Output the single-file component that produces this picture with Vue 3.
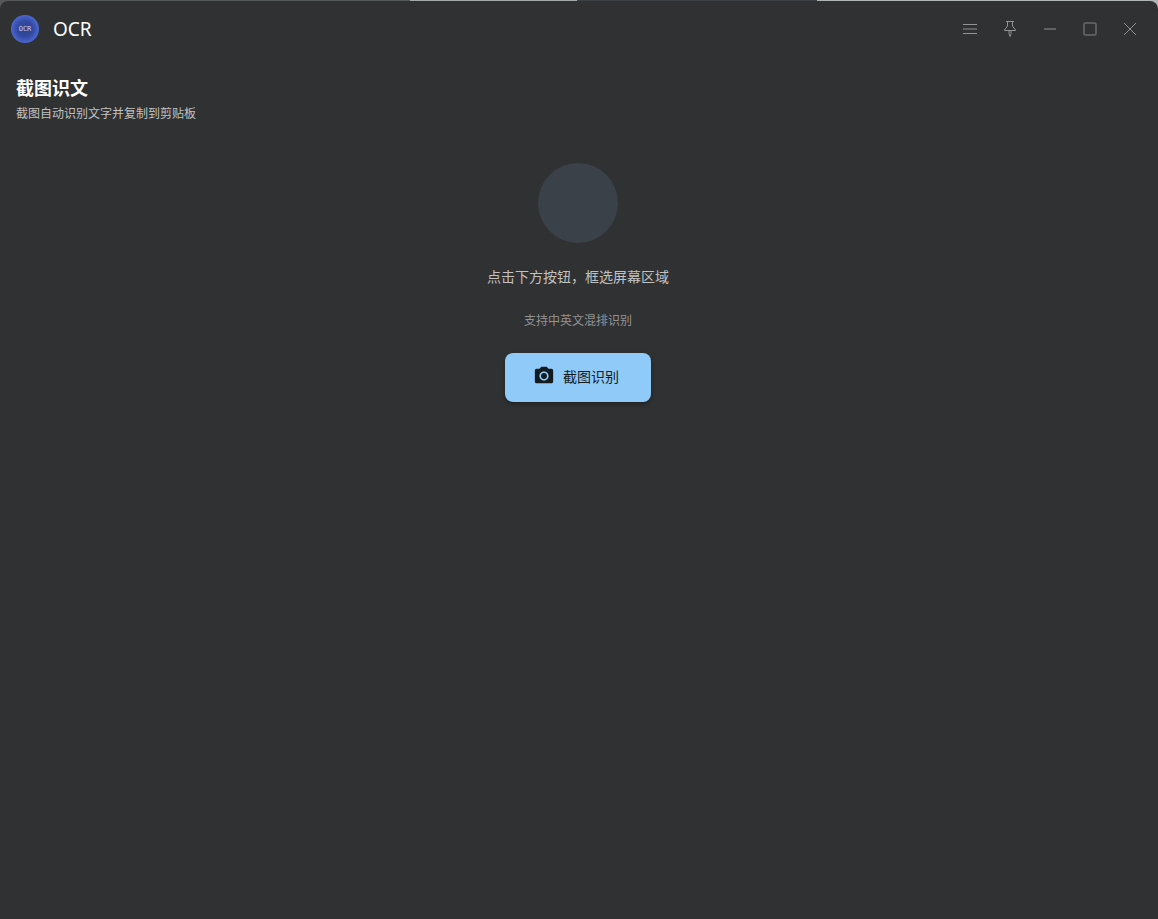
<script setup>
const title = 'OCR'
</script>

<template>
  <div class="desktop">
    <div class="window">
      <header class="titlebar">
        <svg class="logo" viewBox="0 0 28 28" aria-hidden="true">
          <defs>
            <radialGradient id="logo-fill">
              <stop offset="0" stop-color="#2c4089" />
              <stop offset="0.55" stop-color="#3249a0" />
              <stop offset="1" stop-color="#4b67d2" />
            </radialGradient>
          </defs>
          <circle cx="14" cy="14" r="14" fill="url(#logo-fill)" />
          <text x="14" y="16" text-anchor="middle" class="logo-text">OCR</text>
        </svg>
        <span class="app-name">{{ title }}</span>
        <nav class="controls">
          <button type="button" aria-label="菜单">
            <svg viewBox="0 0 20 20"><path d="M3 5.5h14M3 14.5h14" stroke="#929394" /><path d="M3 10h14" stroke="#606163" stroke-width="2" /></svg>
          </button>
          <button type="button" aria-label="置顶">
            <svg viewBox="0 0 20 20"><path d="M6 2.5h8M7.5 2.5v4.5L4.5 11v.5h11V11l-3-4V2.5M9 11.5v3l1 3 1-3v-3" stroke="#929394" /></svg>
          </button>
          <button type="button" aria-label="最小化">
            <svg viewBox="0 0 20 20"><path d="M4 10h12" stroke="#606163" stroke-width="2" /></svg>
          </button>
          <button type="button" aria-label="最大化">
            <svg viewBox="0 0 20 20"><rect x="4" y="4" width="12" height="12" rx="1.5" stroke="#68696b" stroke-width="1.5" /></svg>
          </button>
          <button type="button" aria-label="关闭">
            <svg viewBox="0 0 20 20"><path d="M4 4l12 12M16 4L4 16" stroke="#8e8f90" /></svg>
          </button>
        </nav>
      </header>

      <main>
        <h1>截图识文</h1>
        <p class="subtitle">截图自动识别文字并复制到剪贴板</p>
        <section class="capture">
          <div class="halo"></div>
          <p class="prompt">点击下方按钮，框选屏幕区域</p>
          <p class="hint">支持中英文混排识别</p>
          <button type="button" class="primary">
            <svg viewBox="0 0 24 24" aria-hidden="true">
              <path fill-rule="evenodd" d="M9 2 7.17 4H4c-1.1 0-2 .9-2 2v12c0 1.1.9 2 2 2h16c1.1 0 2-.9 2-2V6c0-1.1-.9-2-2-2h-3.17L15 2zm3 15c-2.76 0-5-2.24-5-5s2.24-5 5-5 5 2.24 5 5-2.24 5-5 5z" />
              <circle cx="12" cy="12" r="3.2" />
            </svg>
            <span>截图识别</span>
          </button>
        </section>
      </main>
    </div>
  </div>
</template>

<style>
body {
  margin: 0;
  background: #303133;
}
</style>

<style scoped>
.desktop {
  box-sizing: border-box;
  min-height: 100vh;
  padding-top: 1px;
  background: linear-gradient(to right, #56595a 0 410px, #a5a9aa 410px 577px, #3e4246 577px 817px, #b2b5b5 817px);
  font-family: "Noto Sans", "Noto Sans CJK SC", sans-serif;
}
.window {
  min-height: calc(100vh - 1px);
  border-radius: 8px 8px 0 0;
  background: #303133;
}
.titlebar {
  display: flex;
  align-items: center;
  height: 56px;
  padding: 0 8px 0 11px;
}
.logo {
  width: 28px;
  height: 28px;
}
.logo-text {
  fill: #c3cdf0;
  font: 7px "DejaVu Sans Mono", monospace;
}
.app-name {
  margin-left: 14px;
  color: #fff;
  font-size: 19px;
  line-height: 28px;
}
.controls {
  display: flex;
  margin-left: auto;
}
.controls button {
  display: grid;
  place-items: center;
  width: 40px;
  height: 40px;
  padding: 0;
  border: 0;
  background: none;
}
.controls svg {
  width: 20px;
  height: 20px;
  fill: none;
}
main {
  padding: 16px 18px 16px 16px;
}
h1,
p {
  margin: 0;
}
h1 {
  color: #fff;
  font: 700 18px/28px "Noto Sans CJK SC", sans-serif;
}
.subtitle,
.prompt,
.hint,
.primary {
  font-family: "Noto Sans CJK SC", sans-serif;
}
.subtitle {
  color: #c1c1c2;
  font-size: 12px;
  line-height: 24px;
}
.capture {
  display: flex;
  flex-direction: column;
  align-items: center;
  padding-top: 38px;
}
.halo {
  width: 80px;
  height: 80px;
  border-radius: 50%;
  background: #3a4149;
}
.prompt {
  margin-top: 23px;
  color: #c1c1c2;
  font-size: 14px;
  line-height: 20px;
}
.hint {
  margin-top: 24px;
  color: #929394;
  font-size: 12px;
  line-height: 20px;
}
.primary {
  display: flex;
  align-items: center;
  justify-content: center;
  gap: 8px;
  height: 49px;
  margin-top: 23px;
  padding: 0 32px 3px 28px;
  border: 0;
  border-radius: 8px;
  background: #90caf9;
  box-shadow: 0 2px 4px rgba(0, 0, 0, 0.35);
  color: #131b21;
  font-size: 14px;
  line-height: 20px;
}
.primary svg {
  width: 22px;
  height: 22px;
  fill: currentColor;
}
</style>
